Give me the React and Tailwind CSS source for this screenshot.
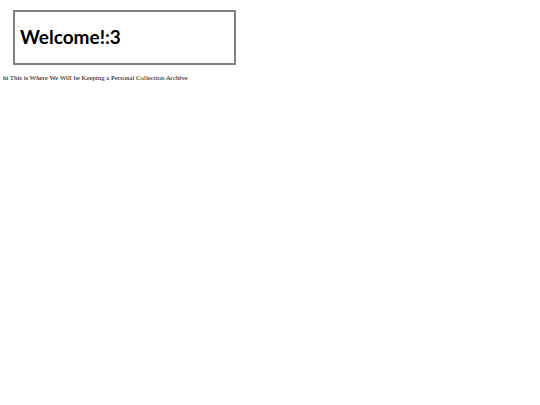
export default function App() {
    return (
        <div className="bg-white min-h-[405px] pt-[10px]">
            {/* Caja de bienvenida */}
            <div className="ml-[13px] w-[223px] h-[55px] border-2 border-[#808080] flex items-center px-[5px]">
                <h1 className="text-[19px] font-bold text-black font-['Comic_Sans_MS','Lato',sans-serif]">
                    Welcome!:3
                </h1>
            </div>
            <p className="mt-[8px] ml-[3px] text-[6.8px] text-black font-['Liberation_Serif',serif]">
                hi This is Where We Will be Keeping a Personal Collection Archive
            </p>
        </div>
    )
}
